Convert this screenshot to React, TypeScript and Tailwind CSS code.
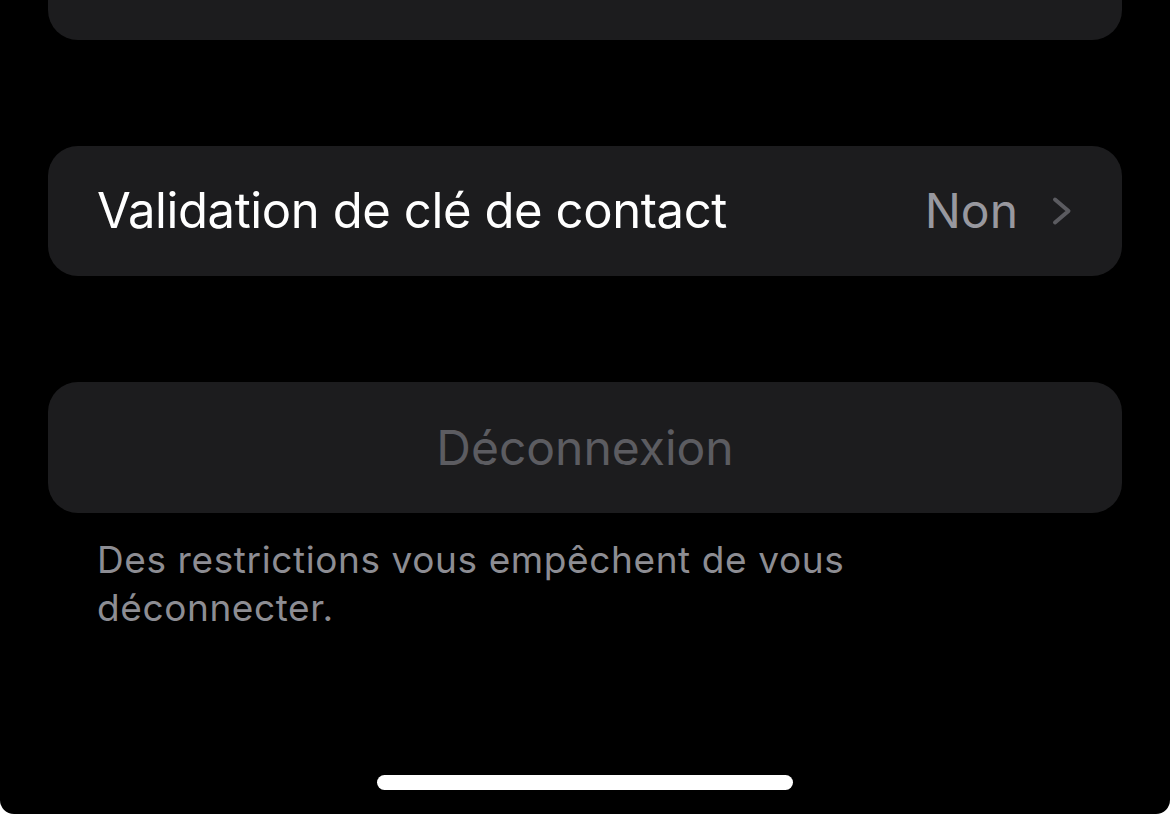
const font = { fontFamily: 'Inter, "Noto Sans", sans-serif' }

function Card({ children, className = '' }: { children: React.ReactNode; className?: string }) {
  return (
    <div className={`mx-[48px] rounded-[30px] bg-[#1c1c1e] ${className}`}>{children}</div>
  )
}

function Chevron() {
  return (
    <svg width="22" height="30" viewBox="0 0 22 30" className="ml-[33px] text-[#5b5b60]" aria-hidden>
      <path
        d="M4 3.5 L17.5 15 L4 26.5"
        fill="none"
        stroke="currentColor"
        strokeWidth="4"
        strokeLinecap="round"
        strokeLinejoin="round"
      />
    </svg>
  )
}

export default function App() {
  return (
    <div className="bg-white">
      <div
        className="relative h-[814px] w-[1170px] overflow-hidden rounded-b-[14px] bg-black"
        style={font}
      >
        {/* bottom of the previous group */}
        <div className="mx-[48px] h-[40px] rounded-b-[30px] bg-[#1c1c1e]" />

        <Card className="mt-[106px] flex h-[130px] items-center pl-[49px] pr-[49px]">
          <span className="flex-1 text-[49px] tracking-[-0.4px] text-white">
            Validation de clé de contact
          </span>
          <span className="text-[48px] text-[#98989f]">Non</span>
          <Chevron />
        </Card>

        <Card className="mt-[106px] flex h-[131px] items-center justify-center">
          <span className="text-[48px] text-[#5c5c61]">Déconnexion</span>
        </Card>

        <p className="mt-[23px] w-[890px] pl-[97px] text-[37px] leading-[48px] tracking-[0.6px] text-[#8d8d93]">
          Des restrictions vous empêchent de vous déconnecter.
        </p>

        <div className="absolute bottom-[24px] left-[377px] h-[15px] w-[416px] rounded-full bg-white" />
      </div>
    </div>
  )
}
